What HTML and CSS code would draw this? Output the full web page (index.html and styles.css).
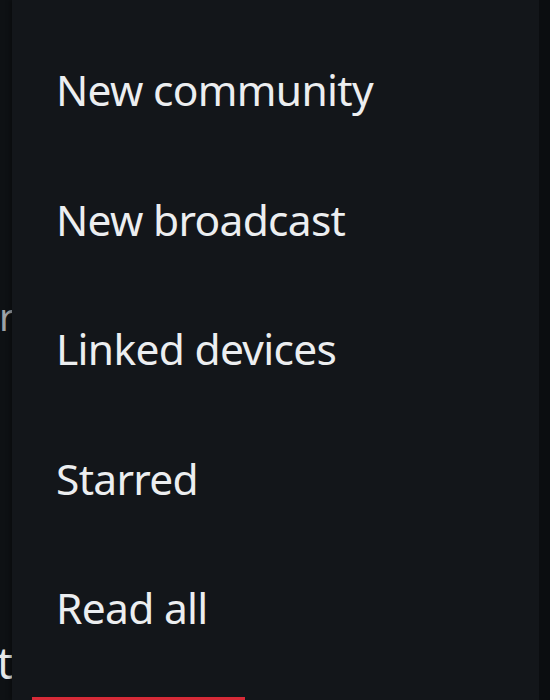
FILE: index.html
```html
<!DOCTYPE html>
<html lang="en">
<head>
    <meta charset="UTF-8">
    <meta name="viewport" content="width=device-width, initial-scale=1.0">
    <title>Menu</title>
    <link rel="stylesheet" href="styles.css">
</head>
<body>
    <div class="screen">
        <div class="behind">
            <div class="peek peek-top">r</div>
            <div class="peek peek-bottom">ta</div>
        </div>

        <ul class="menu">
            <li class="menu-item">New community</li>
            <li class="menu-item">New broadcast</li>
            <li class="menu-item">Linked devices</li>
            <li class="menu-item">Starred</li>
            <li class="menu-item">Read all</li>
        </ul>

        <div class="edge"></div>

        <!-- tab indicator from the screen underneath -->
        <div class="tab-indicator"></div>
    </div>
</body>
</html>
```

FILE: styles.css
```css
html, body {
    margin: 0;
    padding: 0;
    background: #0d1013;
}
.screen {
    position: relative;
    display: flex;
    width: 550px;
    height: 700px;
    overflow: hidden;
    font-family: "Noto Sans", "Open Sans", sans-serif;
}
.behind {
    width: 12px;
    flex-shrink: 0;
    background: #0e1114;
    overflow: hidden;
    display: flex;
    flex-direction: column;
}
.peek {
    white-space: nowrap;
}
.peek-top {
    margin-top: 290px;
    margin-left: -1px;
    font-size: 38px;
    color: #9da1a6;
}
.peek-bottom {
    margin-top: 290px;
    margin-left: -3px;
    font-size: 44px;
    color: #e6e8ea;
}
.menu {
    flex: 1;
    list-style: none;
    margin: 0;
    padding: 25px 0 0 44px;
    background: #13161a;
    box-shadow: -2px 0 4px rgba(0,0,0,0.35);
}
.menu-item {
    font-size: 42.5px;
    line-height: 129.5px;
    letter-spacing: -0.7px;
    color: #eceef0;
    white-space: nowrap;
}
.edge {
    width: 11px;
    flex-shrink: 0;
    background: #0b0d10;
}
.tab-indicator {
    position: absolute;
    left: 32px;
    bottom: 0;
    width: 213px;
    height: 3px;
    background: #d82a37;
}
```
